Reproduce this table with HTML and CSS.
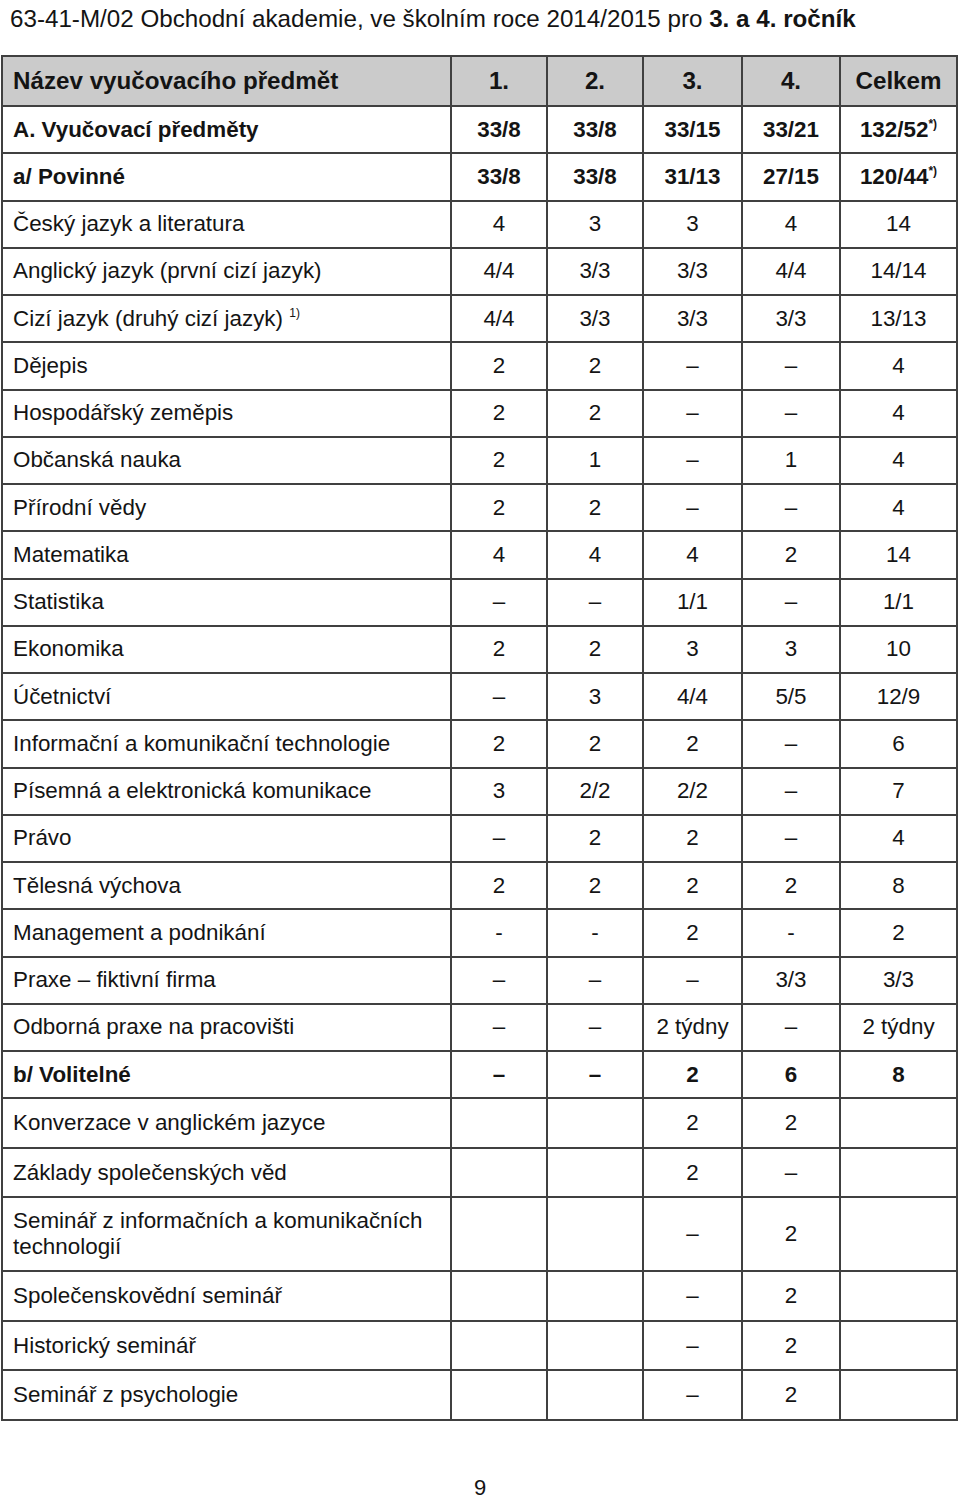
FILE: index.html
```html
<!DOCTYPE html>
<html lang="cs">
<head>
<meta charset="utf-8">
<title>Učební plán</title>
<link rel="stylesheet" href="styles.css">
</head>
<body>
<p class="title">63-41-M/02 Obchodní akademie, ve školním roce 2014/2015 pro <b>3. a 4. ročník</b></p>
<table class="plan">
<colgroup>
<col class="c-name"><col class="c-y"><col class="c-y"><col class="c-y3"><col class="c-y4"><col class="c-sum">
</colgroup>
<thead>
<tr class="head"><th class="name">Název vyučovacího předmět</th><th>1.</th><th>2.</th><th>3.</th><th>4.</th><th>Celkem</th></tr>
</thead>
<tbody>
<tr class="bold"><td class="name">A. Vyučovací předměty</td><td>33/8</td><td>33/8</td><td>33/15</td><td>33/21</td><td>132/52<sup>*)</sup></td></tr>
<tr class="bold"><td class="name">a/ Povinné</td><td>33/8</td><td>33/8</td><td>31/13</td><td>27/15</td><td>120/44<sup>*)</sup></td></tr>
<tr><td class="name">Český jazyk a literatura</td><td>4</td><td>3</td><td>3</td><td>4</td><td>14</td></tr>
<tr><td class="name">Anglický jazyk (první cizí jazyk)</td><td>4/4</td><td>3/3</td><td>3/3</td><td>4/4</td><td>14/14</td></tr>
<tr><td class="name">Cizí jazyk (druhý cizí jazyk) <sup>1)</sup></td><td>4/4</td><td>3/3</td><td>3/3</td><td>3/3</td><td>13/13</td></tr>
<tr><td class="name">Dějepis</td><td>2</td><td>2</td><td>–</td><td>–</td><td>4</td></tr>
<tr><td class="name">Hospodářský zeměpis</td><td>2</td><td>2</td><td>–</td><td>–</td><td>4</td></tr>
<tr><td class="name">Občanská nauka</td><td>2</td><td>1</td><td>–</td><td>1</td><td>4</td></tr>
<tr><td class="name">Přírodní vědy</td><td>2</td><td>2</td><td>–</td><td>–</td><td>4</td></tr>
<tr><td class="name">Matematika</td><td>4</td><td>4</td><td>4</td><td>2</td><td>14</td></tr>
<tr><td class="name">Statistika</td><td>–</td><td>–</td><td>1/1</td><td>–</td><td>1/1</td></tr>
<tr><td class="name">Ekonomika</td><td>2</td><td>2</td><td>3</td><td>3</td><td>10</td></tr>
<tr><td class="name">Účetnictví</td><td>–</td><td>3</td><td>4/4</td><td>5/5</td><td>12/9</td></tr>
<tr><td class="name">Informační a komunikační technologie</td><td>2</td><td>2</td><td>2</td><td>–</td><td>6</td></tr>
<tr><td class="name">Písemná a elektronická komunikace</td><td>3</td><td>2/2</td><td>2/2</td><td>–</td><td>7</td></tr>
<tr><td class="name">Právo</td><td>–</td><td>2</td><td>2</td><td>–</td><td>4</td></tr>
<tr><td class="name">Tělesná výchova</td><td>2</td><td>2</td><td>2</td><td>2</td><td>8</td></tr>
<tr><td class="name">Management a podnikání</td><td>-</td><td>-</td><td>2</td><td>-</td><td>2</td></tr>
<tr><td class="name">Praxe – fiktivní firma</td><td>–</td><td>–</td><td>–</td><td>3/3</td><td>3/3</td></tr>
<tr><td class="name">Odborná praxe na pracovišti</td><td>–</td><td>–</td><td>2 týdny</td><td>–</td><td>2 týdny</td></tr>
<tr class="bold"><td class="name">b/ Volitelné</td><td>–</td><td>–</td><td>2</td><td>6</td><td>8</td></tr>
<tr class="tall"><td class="name">Konverzace v anglickém jazyce</td><td></td><td></td><td>2</td><td>2</td><td></td></tr>
<tr class="tall"><td class="name">Základy společenských věd</td><td></td><td></td><td>2</td><td>–</td><td></td></tr>
<tr class="double"><td class="name">Seminář z informačních a komunikačních technologií</td><td></td><td></td><td>–</td><td>2</td><td></td></tr>
<tr class="tall"><td class="name">Společenskovědní seminář</td><td></td><td></td><td>–</td><td>2</td><td></td></tr>
<tr class="tall"><td class="name">Historický seminář</td><td></td><td></td><td>–</td><td>2</td><td></td></tr>
<tr class="tall"><td class="name">Seminář z psychologie</td><td></td><td></td><td>–</td><td>2</td><td></td></tr>
</tbody>
</table>
<p class="page">9</p>
</body>
</html>
```
FILE: styles.css
```css
html, body {
  margin: 0;
  padding: 0;
  background: #ffffff;
}

body {
  font-family: "Liberation Sans", Arial, sans-serif;
  color: #141414;
}

.title {
  margin: 0;
  padding: 5px 0 0 10px;
  height: 55px;
  box-sizing: border-box;
  font-size: 24.2px;
  line-height: 28px;
}

.plan {
  margin-left: 1px;
  width: 955px;
  border-collapse: collapse;
  table-layout: fixed;
  font-size: 22.4px;
}

.c-name { width: 449px; }
.c-y { width: 96px; }
.c-y3 { width: 99px; }
.c-y4 { width: 98px; }
.c-sum { width: 117px; }

.plan th,
.plan td {
  border: 2px solid #404040;
  text-align: center;
  vertical-align: middle;
  padding: 0 4px;
  line-height: 26px;
  font-weight: normal;
}

.plan .name {
  text-align: left;
  padding-left: 10px;
}

.plan tr { height: 47.25px; }

.plan .head { height: 50px; }

.plan .head th {
  background: #cbcbcb;
  font-weight: bold;
  font-size: 24.2px;
}

.plan .bold td { font-weight: bold; }

.plan .tall { height: 49.5px; }

.plan .double { height: 74px; }

.plan sup {
  font-size: 12px;
  line-height: 0;
  vertical-align: 9px;
}

.page {
  margin: 55px 0 0;
  text-align: center;
  font-size: 22px;
  line-height: 24px;
}
```
